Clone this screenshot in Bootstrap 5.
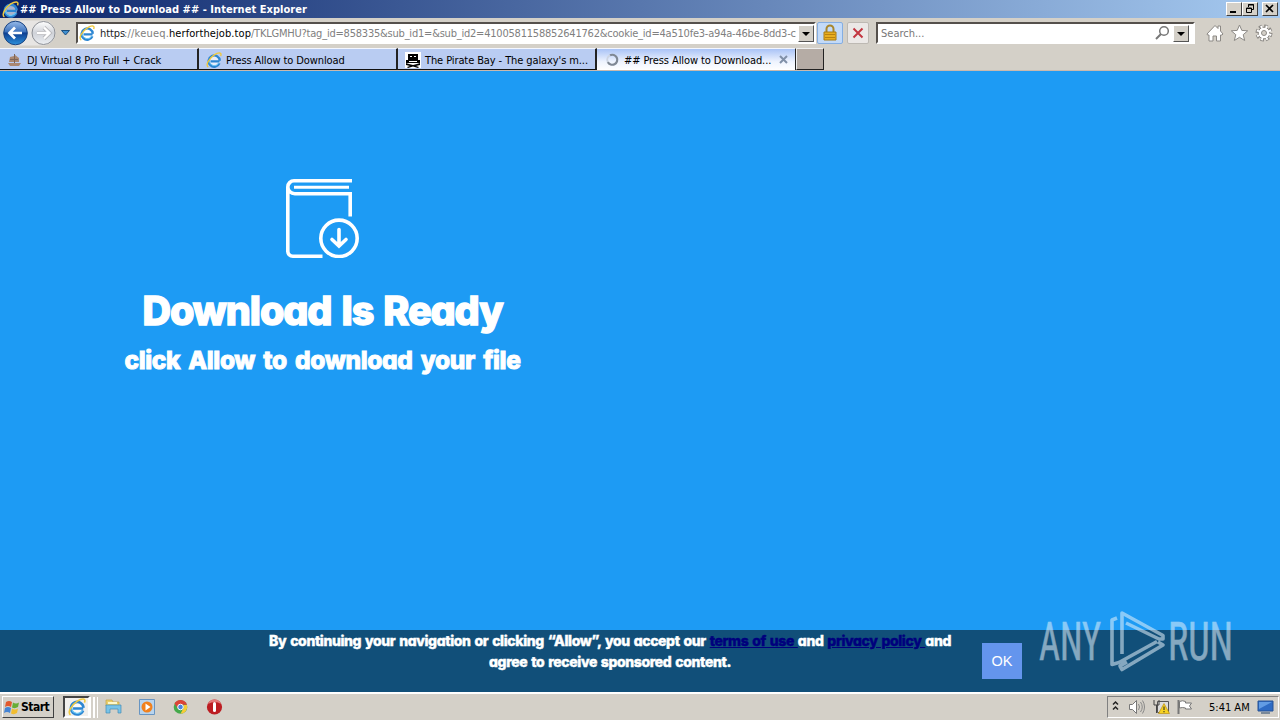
<!DOCTYPE html>
<html lang="en">
<head>
  <meta charset="UTF-8">
  <meta name="viewport" content="width=device-width, initial-scale=1.0">
  <title>## Press Allow to Download ##</title>
  <link href="https://cdn.jsdelivr.net/npm/bootstrap@5.3.2/dist/css/bootstrap.min.css" rel="stylesheet">
  <style>
    body { width: 1280px; height: 720px; font: 11px/14px "DejaVu Sans Condensed", "DejaVu Sans", sans-serif; font-stretch: condensed; color: #000; background: #d4d0c8; }
    svg { display: block; flex: none; }
    .title-bar { height: 18px; background: linear-gradient(90deg, #0a246a, #a6caf0); padding: 0 2px; }
    .title-text { font-weight: 700; color: #fff; margin-left: 1px; padding-top: 1px; letter-spacing: .04px; }
    .win-btn { width: 16px; height: 14px; background: #d4d0c8; border: 1px solid; border-color: #fff #404040 #404040 #fff; }
    .nav-bar { height: 30px; padding: 0 7px 0 2px; }
    .field { height: 22px; background: #fff; border: 2px solid; border-color: #55504c #fff #fff #55504c; }
    .field span { padding-top: 2px; }
    .address { width: 740px; margin-left: 6px; padding-left: 1px; color: #808080; }
    .address svg { margin-right: 5px; }
    .search-box { width: 319px; margin-left: 7px; padding: 0 4px 0 3px; color: #777; }
    .drop-btn { width: 16px; height: 17px; background: #d4d0c8; border: 1px solid; border-color: #fff #555 #555 #fff; }
    .tool-btn { height: 22px; border: 1px solid #bdb9b3; border-radius: 2px; background: #ebe8e6; }
    .lock-btn { width: 26px; margin-left: 1px; background: #c3daf8; border-color: #85aee2; }
    .stop-btn { width: 22px; margin-left: 4px; }
    .url-a { width: 24px; color: #222; letter-spacing: -.1px; }
    .url-b { width: 45px; letter-spacing: .2px; }
    .url-c { width: 82px; color: #000; letter-spacing: .08px; }
    .url-d { width: 546px; letter-spacing: -.215px; }
    .tab-strip { height: 23px; border-bottom: 1px solid #c9b9ad; }
    .tab-item { width: 199px; background: #b9ccf2; border-top: 1px solid #f4f7ff; border-right: 2px solid #222; border-bottom: 1px solid #111; padding: 1px 6px 0 7px; }
    .tab-item span { padding-top: 2px; letter-spacing: -.1px; }
    .tab-current { background: linear-gradient(#a9c3f6, #eef3fe 60%, #fff); border-right-width: 1px; border-bottom: 0; padding-left: 8px; }
    .tab-new { width: 28px; background: #b5aca5; border: 1px solid #222; border-top-color: #eee; border-left-color: #eee; }
    .page { height: 559px; background: #1d9bf4; }
    .hero { width: 645px; padding-top: 108px; }
    .rounded-text { font-family: Inter, "Liberation Sans", sans-serif; font-feature-settings: "cv11"; font-stretch: normal; font-weight: 800; color: #fff; paint-order: stroke; -webkit-text-stroke: 1.4px #fff; stroke-linejoin: round; }
    .hero h1 { font-size: 39.5px; line-height: 48px; margin: 29px 0 0; letter-spacing: -1.1px; word-spacing: 2.5px; }
    .hero h2 { font-size: 24.5px; line-height: 32px; margin: 9px 0 0; -webkit-text-stroke-width: .9px; letter-spacing: -.4px; word-spacing: 3.3px; }
    .consent { height: 62px; background: #114f79; padding-left: 260px; }
    .consent p { width: 700px; font-size: 14px; line-height: 21px; -webkit-text-stroke-width: .4px; letter-spacing: -.38px; word-spacing: 1.2px; }
    .consent a { color: #00007d; -webkit-text-stroke-color: #00007d; }
    .ok-btn { width: 40px; height: 36px; margin: 13px 0 0 22px; background: #6495ed; color: #fff; font: 14.5px "Liberation Sans", sans-serif; }
    .watermark { left: 1036px; top: 606px; overflow: visible; }
    .task-bar { height: 28px; border-top: 2px solid #fff; padding: 0 1px 0 2px; }
    .start-btn { width: 52px; height: 22px; background: #d4d0c8; border: 1px solid; border-color: #fff #404040 #404040 #fff; font-weight: 700; font-size: 12px; letter-spacing: -.5px; padding-left: 1px; }
    .task-active { width: 27px; height: 22px; margin-left: 9px; background: #f2f0ed; border: 2px solid; border-color: #444 #fff #fff #444; }
    .task-grip { width: 4px; height: 21px; border-left: 1px solid #fff; border-right: 1px solid #fff; background: #d4d0c8; }
    .tray { width: 172px; height: 22px; border: 1px solid; border-color: #808080 #fff #fff #808080; padding-left: 3px; }
    .tray span { margin-left: 6px; padding-top: 1px; }
  </style>
</head>
<body class="d-flex flex-column overflow-hidden position-relative">
  <svg width="0" height="0" class="position-absolute">
    <symbol id="ie" viewBox="0 0 16 16">
      <circle cx="8.200" cy="8.600" r="6" fill="#fff" opacity=".65"/>
      <path d="M13.600 9.300H4.500M13.400 11.200A5.600 5.600 0 1 1 13.800 8.800" fill="none" stroke="#2d86d2" stroke-width="2.300"/>
      <path d="M12.800 11.200A5.200 5.200 0 0 1 3.200 9" fill="none" stroke="#6cc8f5" stroke-width="1"/>
      <path d="M2.300 15C-.8 13.500 2.600 6.500 8.300 2.800 12.400.2 16.300 0 14.600 4.100" fill="none" stroke="#f0c93f" stroke-width="1.400"/>
    </symbol>
  </svg>

  <div class="title-bar d-flex align-items-center">
    <svg width="17" height="17"><use href="#ie"/></svg>
    <span class="title-text text-nowrap">## Press Allow to Download ## - Internet Explorer</span>
    <div class="d-flex ms-auto">
      <div class="win-btn"><svg width="14" height="12"><path d="M3 9h6" stroke="#000" stroke-width="2"/></svg></div>
      <div class="win-btn"><svg width="14" height="12"><path d="M5.500 4V1.500h5v5H9M3.500 5h5v4.500h-5zM3 5.500h6M5 2h6" fill="none" stroke="#000"/></svg></div>
      <div class="win-btn ms-1"><svg width="14" height="12"><path d="M3 2l7 7M10 2l-7 7" stroke="#000" stroke-width="1.700"/></svg></div>
    </div>
  </div>

  <div class="nav-bar d-flex align-items-center">
    <svg width="68" height="28" viewBox="2 20 68 28">
      <defs>
        <linearGradient id="back" x2="0" y2="1"><stop stop-color="#98bbe9"/><stop offset=".45" stop-color="#3c72bd"/><stop offset=".5" stop-color="#0d3e91"/><stop offset="1" stop-color="#2c91dc"/></linearGradient>
        <linearGradient id="fwd" x2="0" y2="1"><stop stop-color="#fff"/><stop offset=".5" stop-color="#cfd2d8"/><stop offset="1" stop-color="#eceff3"/></linearGradient>
      </defs>
      <path d="M15 21.500h28a12.500 12.500 0 0 1 0 25H15" fill="#e7e5e3"/>
      <circle cx="15.500" cy="34" r="11.800" fill="url(#back)" stroke="#17417f"/>
      <circle cx="43.500" cy="34" r="11.500" fill="url(#fwd)" stroke="#8d9096"/>
      <path d="M9.500 34H22M15 28.500L9.500 34l5.500 5.500" fill="none" stroke="#fff" stroke-width="2.700"/>
      <path d="M37 34h12.500M44 28.500l5.500 5.500-5.500 5.500" fill="none" stroke="#b6b6ba" stroke-width="4"/>
      <path d="M37 34h12M44 28.500l5.500 5.500-5.500 5.500" fill="none" stroke="#fff" stroke-width="2.400"/>
      <path d="M61.500 31.500h8l-4 4.500z" fill="#3f8fd0" stroke="#174d7f"/>
    </svg>
    <div class="field address d-flex align-items-center text-nowrap">
      <svg width="16" height="16"><use href="#ie"/></svg>
      <span class="url-a">https</span><span class="url-b">://keueq.</span><span class="url-c">herforthejob.top</span><span class="url-d">/TKLGMHU?tag_id=858335&amp;sub_id1=&amp;sub_id2=4100581158852641762&amp;cookie_id=4a510fe3-a94a-46be-8dd3-c</span>
      <div class="drop-btn ms-auto"><svg width="14" height="15"><path d="M3 6h8l-4 4z"/></svg></div>
    </div>
    <div class="tool-btn lock-btn d-flex justify-content-center align-items-center">
      <svg width="16" height="18"><path d="M4.500 9V5a3.500 3.500 0 0 1 7 0v4" fill="none" stroke="#a8862c" stroke-width="2"/><path d="M2 8h12v8H2z" fill="#e9ae1f" stroke="#a97b13"/><path d="M3 10.500h10M3 13.500h10" stroke="#b9820f"/></svg>
    </div>
    <div class="tool-btn stop-btn d-flex justify-content-center align-items-center">
      <svg width="14" height="14"><path d="M2.500 2.500l9 9M11.500 2.500l-9 9" stroke="#c23640" stroke-width="2"/></svg>
    </div>
    <div class="field search-box d-flex align-items-center">
      <span>Search...</span>
      <svg width="14" height="16" class="ms-auto"><circle cx="9" cy="6" r="4.300" fill="none" stroke="#777" stroke-width="1.500"/><path d="M6 9L1 14" stroke="#777" stroke-width="2"/></svg>
      <div class="drop-btn ms-1"><svg width="14" height="15"><path d="M3 6h8l-4 4z"/></svg></div>
    </div>
    <svg width="70" height="20" viewBox="1203 25 70 20" class="ms-auto" fill="#fff" stroke="#8c8985">
      <path d="M1207 36l8-8.500 3 3V28h2.500v5l2.500 3-1 1h-1.500v6h-4v-5h-3.500v5h-4v-6h-1.500z"/>
      <path d="M1239.500 27l2.300 5.400 5.900.4-4.500 3.900 1.500 5.800-5.200-3.200-5.200 3.200 1.500-5.800-4.500-3.900 5.900-.4z"/>
      <circle cx="1264" cy="35" r="6.700" fill="none" stroke-width="3.600" stroke-dasharray="3.400 1.862"/>
      <circle cx="1264" cy="35" r="5.800"/>
      <circle cx="1264" cy="35" r="6.300" fill="none" stroke="#fff" stroke-width="2.600" stroke-dasharray="1.800 3.148" stroke-dashoffset="-.8"/>
      <circle cx="1264" cy="35" r="2.500" fill="#d4d0c8"/>
    </svg>
  </div>

  <div class="tab-strip d-flex text-nowrap">
    <div class="tab-item d-flex align-items-center">
      <svg width="16" height="16" class="me-1"><path d="M1 11h13l-2 3H3zM3 5l4-1v6H2zM8 3l4 3v4H8z" fill="#a98771"/><path d="M7.500 2v9M3 7.500h8" stroke="#7d6558"/></svg>
      <span>DJ Virtual 8 Pro Full + Crack</span>
    </div>
    <div class="tab-item d-flex align-items-center">
      <svg width="16" height="16" class="me-1"><use href="#ie"/></svg>
      <span>Press Allow to Download</span>
    </div>
    <div class="tab-item d-flex align-items-center">
      <svg width="16" height="16" class="me-1"><rect width="16" height="16" fill="#fff"/><path d="M3 2h10v6h2v3H1V8h2zM1 11l3 1 4 1 4-1 3-1v2l-4 1 3 1-1 1-5-1.500L3 16l-1-1 3-1-4-1z"/><path d="M5 4.500h2M9 4.500h2M4 9.500h8" stroke="#fff"/></svg>
      <span>The Pirate Bay - The galaxy's m...</span>
    </div>
    <div class="tab-item tab-current d-flex align-items-center">
      <svg width="15" height="16" class="me-1"><path d="M5 3.300A5 5 0 1 1 2.800 10" fill="none" stroke="#7f8894" stroke-width="2.200"/><path d="M2.800 10A5 5 0 0 1 5 3.300" fill="none" stroke="#ccd4e2" stroke-width="2"/></svg>
      <span>## Press Allow to Download...</span>
      <svg width="10" height="10" class="ms-auto"><path d="M1 1l7 7M8 1L1 8" stroke="#8190a8" stroke-width="2"/></svg>
    </div>
    <div class="tab-new"></div>
  </div>

  <div class="page">
    <div class="hero d-flex flex-column align-items-center text-nowrap">
      <svg width="73" height="79" viewBox="286 179 73 79" fill="none" stroke="#fff" stroke-width="3.600">
        <path d="M352 180.800H294a6.200 6.200 0 0 0-6.200 6.200V251a5 5 0 0 0 5 5.200H322.500M287.800 187a7 7 0 0 0 7 6.800H350.200V216.500"/>
        <path d="M294 187.300H349" stroke-width="3"/>
        <circle cx="339" cy="238.300" r="18.200"/>
        <path d="M339 229.500v16M332 239.500l7 6.500 7-6.500" stroke-linecap="round"/>
      </svg>
      <h1 class="rounded-text">Download Is Ready</h1>
      <h2 class="rounded-text">click Allow to download your file</h2>
    </div>
  </div>
  <div class="consent d-flex">
    <p class="rounded-text text-center text-nowrap mb-0">By continuing your navigation or clicking “Allow”, you accept our <a href="#">terms of use </a>and <a href="#">privacy policy </a>and<br>agree to receive sponsored content.</p>
    <button class="ok-btn border-0 p-0">OK</button>
  </div>

  <div class="task-bar d-flex align-items-center">
    <div class="start-btn d-flex align-items-center">
      <svg width="17" height="16"><path d="M2 3q3-2 6 0L7 8Q4 6 1 8z" fill="#e2592d"/><path d="M9 3.500q3 2 6 0L14 8q-3 2-6 .500z" fill="#68ad35"/><path d="M1 9q3-2 6 0l-1 5q-3-2-6 0z" fill="#4584d4"/><path d="M8 9.500q3 2 6 0L13 14q-3 2-6 .500z" fill="#f2bd30"/></svg>
      <span>Start</span>
    </div>
    <div class="task-active d-flex justify-content-center align-items-center"><svg width="18" height="18"><use href="#ie"/></svg></div>
    <div class="task-grip"></div>
    <div class="task-grip"></div>
    <svg width="126" height="20" viewBox="98 697 126 20">
      <path d="M106 700h6l1 2h6v4h-13z" fill="#eccf6a" stroke="#c6a345" stroke-width=".7"/>
      <path d="M106 705h15v8h-3v-4h-8v4h-4z" fill="#78c3e8" stroke="#468eb6" stroke-width=".7"/>
      <path d="M108 703h9" stroke="#fff9cc" stroke-width="2"/>
      <path d="M139.500 699.500h15v15h-15z" fill="#b8d4ee" stroke="#6895c2"/>
      <circle cx="147" cy="707" r="5.500" fill="#f1811d"/><path d="M145.500 703.500l5 3.500-5 3.500z" fill="#fff"/>
      <circle cx="180.500" cy="707" r="6.800" fill="#44a94b"/>
      <path d="M174.500 703.500a6.800 6.800 0 0 1 12.500 1.200h-6.500l-2.500 4z" fill="#dc4437"/>
      <path d="M187 705a6.800 6.800 0 0 1-6.500 8.800l3-5.800v-3z" fill="#f7cc36"/>
      <circle cx="180.500" cy="707" r="2.800" fill="#4a86e0" stroke="#fff"/>
      <circle cx="214.500" cy="707" r="7.600" fill="#bc1d22"/><path d="M208 704a7 7 0 0 1 13 0q-6-4-13 0z" fill="#e47979"/>
      <rect x="213" y="702" width="3" height="10" rx="1.500" fill="#fff"/>
    </svg>
    <div class="tray d-flex align-items-center ms-auto">
      <svg width="92" height="20" viewBox="1111 697 92 20" fill="none" stroke="#222">
        <path d="M1113 704.500l2.500-2.500 2.500 2.500M1113 709.500l2.500-2.500 2.500 2.500" stroke-width="1.500"/>
        <path d="M1129.500 704.500h3l4-4v13l-4-4h-3z" fill="#fff" stroke="#777"/>
        <path d="M1138.500 704q2 3 0 6M1140.500 702q3.500 5 0 10M1142.500 700.500q4 6.500 0 13" stroke="#888"/>
        <path d="M1157.500 701.500h11v11h-11z" fill="#ddd" stroke="#555"/><path d="M1154 700v5h5v-5M1156.500 705v8" stroke="#444"/>
        <path d="M1164 703.500l5.500 10h-11z" fill="#f7d323" stroke="#bd9111" stroke-width=".7"/><path d="M1164 706.500v3.500M1164 711v1.300"/>
        <path d="M1178.500 700v14" stroke="#777" stroke-width="2"/><path d="M1179.500 701.500q3-1.500 6 0v1.500h6l-2 3 2 3h-6v-1q-3-1-6 0z" fill="#fff" stroke="#777"/>
      </svg>
      <span class="text-nowrap">5:41 AM</span>
      <svg width="17" height="18" class="ms-auto me-1"><path d="M1 3h15v10H1z" fill="#2e6bc4" stroke="#275394"/><path d="M2 4h13L2 11z" fill="#629ce4"/><path d="M4 15h9" stroke="#5e7288" stroke-width="1.500"/></svg>
    </div>
  </div>

  <svg class="watermark position-absolute" width="200" height="76" viewBox="1036 606 200 76" opacity=".55">
    <g fill="#e4f1fa" stroke="#e4f1fa" stroke-width=".5" font-family="Roboto" font-weight="400" font-size="53">
      <text x="1039" y="660" textLength="62" lengthAdjust="spacingAndGlyphs">ANY</text>
      <text x="1168" y="660" textLength="65" lengthAdjust="spacingAndGlyphs">RUN</text>
    </g>
    <path fill="none" stroke="#e4f1fa" stroke-width="3.600" stroke-linejoin="round" d="M1117 618l-5 2v44.500l7-2 38-21M1122 654v-41l41 22.500v3.500h-4l-33-16M1158 642l5 3-41 24.500-2-3.500 7-4"/>
  </svg>
  <script src="https://cdn.jsdelivr.net/npm/bootstrap@5.3.2/dist/js/bootstrap.bundle.min.js"></script>
</body>
</html>
